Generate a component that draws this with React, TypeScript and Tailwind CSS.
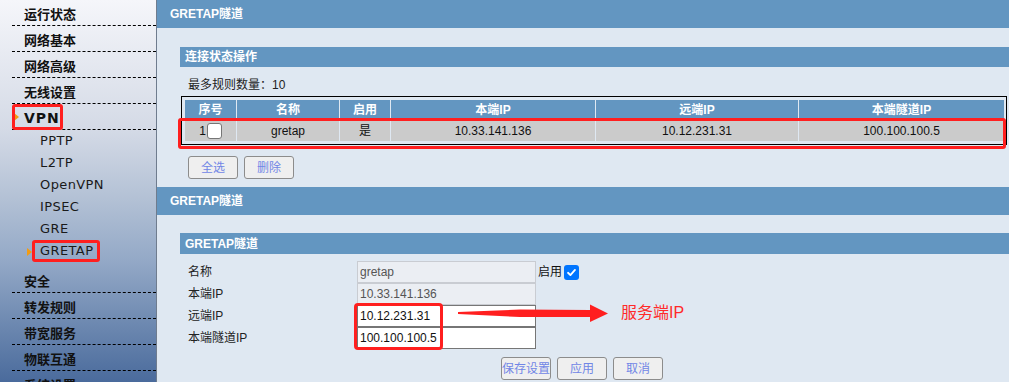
import React from 'react';

const topMenu = ['运行状态', '网络基本', '网络高级', '无线设置'];
const vpnMenu = ['PPTP', 'L2TP', 'OpenVPN', 'IPSEC', 'GRE', 'GRETAP'];
const bottomMenu = ['安全', '转发规则', '带宽服务', '物联互通', '系统设置'];

const tunnels = [
  { id: 1, name: 'gretap', enabled: '是', localIp: '10.33.141.136', remoteIp: '10.12.231.31', tunnelIp: '100.100.100.5' },
];

const Arrow = () => <span className="absolute left-[2px] top-[9px] h-0 w-0 border-y-[4px] border-l-[5px] border-y-transparent border-l-[#f39c12]" />;

const MenuItem: React.FC<{ label: string; latin?: boolean; marked?: boolean }> = ({ label, latin, marked }) => (
  <div className="relative ml-[12px] flex h-[26px] items-center border-b border-dashed border-black pl-[12px] pt-[4px] text-[13px] font-bold text-[#111]">
    {marked && <Arrow />}
    <span className={latin ? 'text-[14px] tracking-[1px]' : ''}>{label}</span>
  </div>
);

const Button: React.FC<{ label: string }> = ({ label }) => (
  <button className="h-[23px] w-[50px] rounded-[3px] border border-[#8c8c8c] bg-[#efefef] text-[12px] text-[#7186e6]">{label}</button>
);

const Field: React.FC<{ label: string; value: string; disabled?: boolean; children?: React.ReactNode }> = ({ label, value, disabled, children }) => (
  <div className="flex h-[22px] items-center">
    <span className="w-[169px] shrink-0 text-[12px] text-[#222]">{label}</span>
    <input
      readOnly
      value={value}
      className={
        disabled
          ? 'h-[22px] w-[179px] border border-[#c9ccd2] bg-[#ebeef3] px-[2px] text-[12px] text-[#555] outline-none'
          : 'h-[22px] w-[179px] border border-[#767676] bg-white px-[2px] text-[12px] text-[#111] outline-none'
      }
    />
    {children}
  </div>
);

export default function App() {
  return (
    <div className="relative flex h-[382px] w-full overflow-hidden font-['Liberation_Sans','Noto_Sans_CJK_SC',sans-serif]">
      {/* 左侧菜单 */}
      <div className="h-[382px] w-[157px] shrink-0 border-r border-[#6f7c8e] bg-[linear-gradient(to_bottom,#f5f6fa_0%,#d4dae6_34%,#b3c1d5_52%,#94a9c7_68%,#4a6b9c_100%)] font-['DejaVu_Sans','Noto_Sans_CJK_SC',sans-serif]">
        {topMenu.map((m) => (
          <MenuItem key={m} label={m} />
        ))}
        <MenuItem label="VPN" latin marked />
        <div className="pb-[5px]">
          {vpnMenu.map((m) => (
            <div key={m} className="relative flex h-[22px] items-center pl-[40px] text-[13px] tracking-[0.4px] text-[#1a1a1a]">
              {m === 'GRETAP' && <span className="absolute left-[27px] top-[8px] h-0 w-0 border-y-[4px] border-l-[5px] border-y-transparent border-l-[#f39c12]" />}
              {m}
            </div>
          ))}
        </div>
        {bottomMenu.map((m) => (
          <MenuItem key={m} label={m} />
        ))}
      </div>

      {/* 主内容 */}
      <div className="h-[382px] flex-1 bg-[#dfe8f2]">
        <div className="flex h-[28px] items-center bg-[#6396c1] pl-[13px] text-[12px] font-bold text-white">GRETAP隧道</div>

        <div className="ml-[23px] mt-[19px] flex h-[20px] items-center bg-[#6396c1] pl-[5px] text-[12px] font-bold text-white">连接状态操作</div>
        <div className="mt-[7px] h-[22px] pl-[31px] text-[12px] leading-[22px] text-[#222]">最多规则数量：10</div>

        <div className="ml-[24px] mr-[2px] border border-black py-[2px] pl-[2px] pr-[1px]">
          <table className="w-full table-fixed border-separate border-spacing-px text-[12px]">
            <colgroup>
              <col className="w-[51px]" />
              <col className="w-[102px]" />
              <col className="w-[50px]" />
              <col className="w-[204px]" />
              <col className="w-[202px]" />
              <col />
            </colgroup>
            <thead>
              <tr className="h-[20px] bg-[#6396c1] font-bold text-white">
                <th>序号</th>
                <th>名称</th>
                <th>启用</th>
                <th>本端IP</th>
                <th>远端IP</th>
                <th>本端隧道IP</th>
              </tr>
            </thead>
            <tbody>
              {tunnels.map((t) => (
                <tr key={t.id} className="h-[20px] bg-[#cbcbcb] text-center text-[#111]">
                  <td>
                    <div className="flex items-center justify-center gap-[1px]">
                      <span>{t.id}</span>
                      <span className="h-[16px] w-[15px] rounded-[3px] border border-[#767676] bg-white" />
                    </div>
                  </td>
                  <td>{t.name}</td>
                  <td>{t.enabled}</td>
                  <td>{t.localIp}</td>
                  <td>{t.remoteIp}</td>
                  <td>{t.tunnelIp}</td>
                </tr>
              ))}
            </tbody>
          </table>
        </div>

        <div className="ml-[31px] mt-[11px] flex gap-[6px]">
          <Button label="全选" />
          <Button label="删除" />
        </div>

        <div className="mt-[8px] flex h-[28px] items-center bg-[#6396c1] pl-[13px] text-[12px] font-bold text-white">GRETAP隧道</div>
        <div className="ml-[23px] mt-[18px] flex h-[21px] items-center bg-[#6396c1] pl-[5px] text-[12px] font-bold text-white">GRETAP隧道</div>

        <div className="ml-[31px] mt-[7px]">
          <Field label="名称" value="gretap" disabled>
            <span className="ml-[2px] text-[12px] text-[#111]">启用</span>
            <span className="ml-[2px] flex h-[15px] w-[15px] items-center justify-center rounded-[3px] bg-[#0075ff]">
              <svg viewBox="0 0 12 12" className="h-[11px] w-[11px]">
                <path d="M2.2 6.3 L4.8 8.8 L9.8 3.2" fill="none" stroke="white" strokeWidth="2" strokeLinecap="round" strokeLinejoin="round" />
              </svg>
            </span>
          </Field>
          <Field label="本端IP" value="10.33.141.136" disabled />
          <Field label="远端IP" value="10.12.231.31" />
          <Field label="本端隧道IP" value="100.100.100.5" />
        </div>

        <div className="mt-[8px] flex justify-center gap-[6px] pr-[2px]">
          <Button label="保存设置" />
          <Button label="应用" />
          <Button label="取消" />
        </div>
      </div>

      {/* 标注 */}
      <div className="pointer-events-none absolute left-[12px] top-[104px] h-[26px] w-[51px] rounded-[3px] border-[3px] border-[#ff1f1f]" />
      <div className="pointer-events-none absolute left-[32px] top-[240px] h-[22px] w-[68px] rounded-[3px] border-[3px] border-[#ff1f1f]" />
      <div className="pointer-events-none absolute left-[178px] top-[118px] h-[31px] w-[828px] rounded-[3px] border-[3px] border-[#ff1f1f]" />
      <div className="pointer-events-none absolute left-[354px] top-[303px] h-[47px] w-[89px] rounded-[4px] border-[3px] border-[#ff1f1f]" />
      <svg className="pointer-events-none absolute left-[455px] top-[300px]" width="156" height="26" viewBox="0 0 156 26">
        <polygon points="3,12 65,9.5 135,10 135,4.5 153,13.5 135,22 135,17 65,17 3,14" fill="#ff1f1f" />
      </svg>
      <div className="pointer-events-none absolute left-[621px] top-[302px] text-[16px] leading-[22px] text-[#ff2a2a]">服务端IP</div>
    </div>
  );
}
